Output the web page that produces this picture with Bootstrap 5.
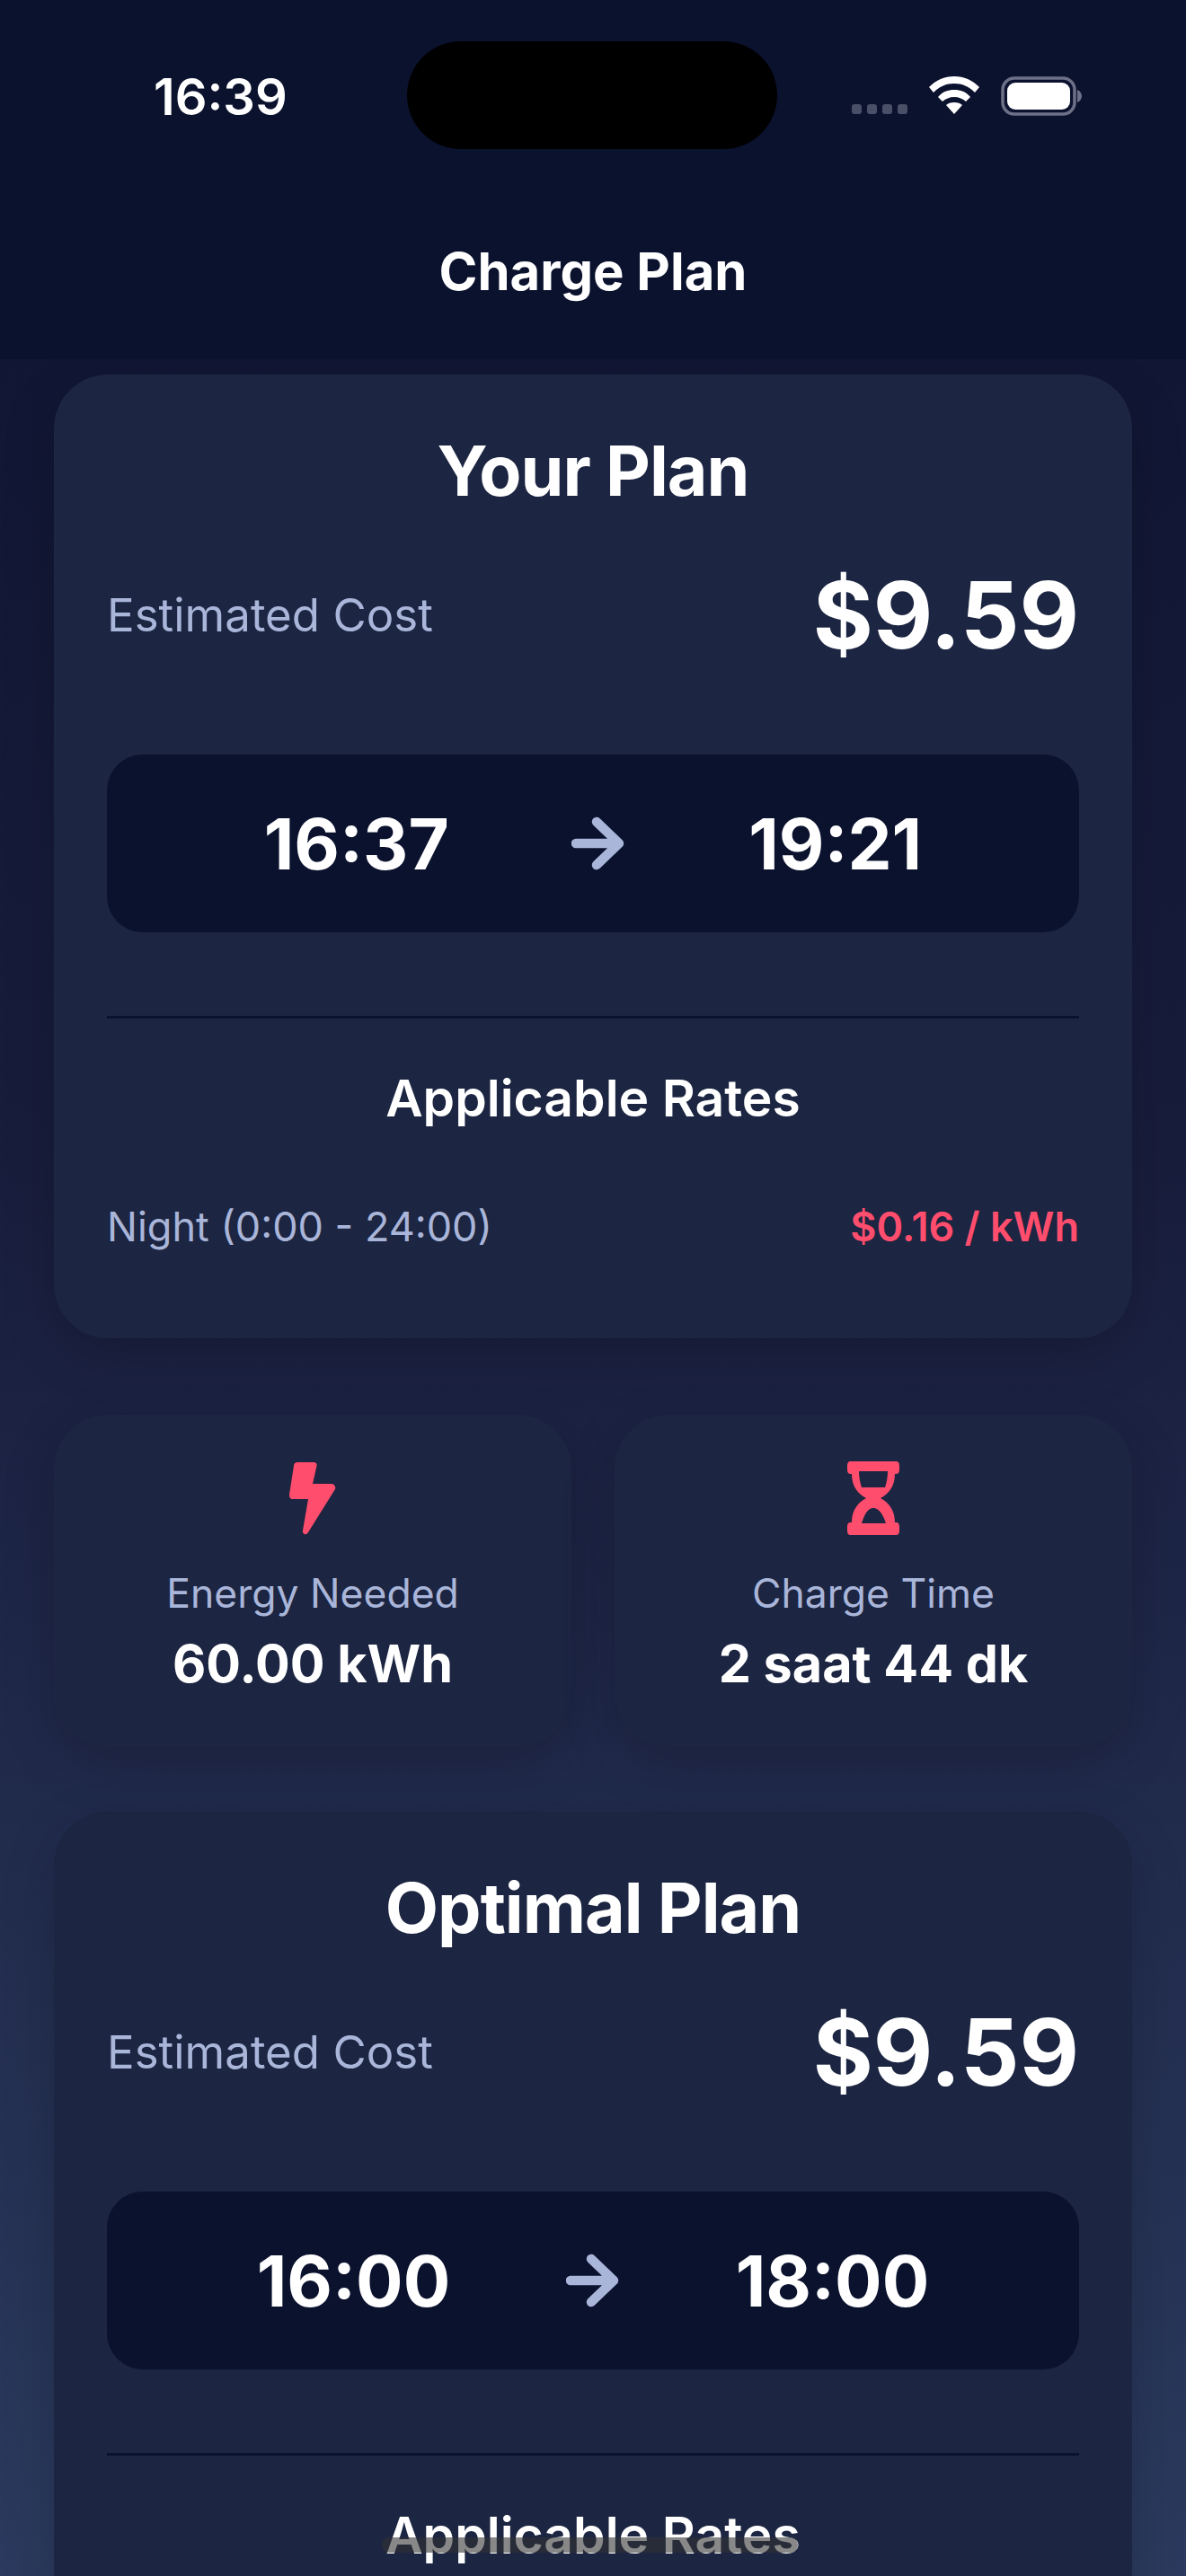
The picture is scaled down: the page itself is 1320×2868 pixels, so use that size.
<!DOCTYPE html>
<html lang="en"><head><meta charset="utf-8"><title>Charge Plan</title>
<link href="https://cdn.jsdelivr.net/npm/bootstrap@5.3.0/dist/css/bootstrap.min.css" rel="stylesheet">
<style>
html,body{height:2868px;overflow:hidden}
body{font-family:Inter,"Liberation Sans",sans-serif;color:#fff;background:linear-gradient(180deg,#0d1330 0%,#181d3c 45%,#2b3a5e 100%);position:relative}
.top-wrap{height:400px;background:#0b122e}
.status-strip{height:220px;padding:46px 116px 0 171px}
.clock{font-size:56px;font-weight:600;line-height:124px;width:150px}
.island{width:412px;height:120px;background:#000;border-radius:60px;margin-left:132px}
.status-icons{margin-left:auto;height:90px;padding-top:39px}
.sig-dots{gap:6px;padding-top:31px;margin-right:24px}
.sig-dots i{width:11px;height:11px;border-radius:3px;background:#4a4f68;display:block}
.wifi-svg{margin-right:24px}
.top-title{font-size:58px;font-weight:650;line-height:164px;text-align:center}
.sheet{padding:17px 60px 0;height:2468px;overflow:hidden}
.panel{background:#1c2541;border-radius:60px;box-shadow:0 20px 60px rgba(0,0,0,.18)}
.main-panel{padding:61px 59px 0;height:1073px}
.panel-title{font-size:77px;font-weight:700;line-height:92px;text-align:center;margin:0;letter-spacing:-1px}
.cost-row{margin-top:39px;height:152px}
.cost-label{font-size:51px;color:#a9b5d9;font-weight:400}
.cost-value{font-size:102.5px;font-weight:700;line-height:120px}
.time-box{background:#0b122e;border-radius:40px;height:198px;margin-top:79px;padding:0 38px;font-size:78px;font-weight:700}
.arrow-svg{width:60px;height:60px}
.rule{height:3px;background:#0b122e;margin-top:93px}
.rates-title{font-size:57px;font-weight:600;line-height:68px;text-align:center;margin-top:55px}
.rate-row{margin-top:79px;height:60px;font-size:45px;color:#a9b5d9}
.rate-price{color:#ff4d6d;font-weight:600}
.stat-grid{margin-top:85px;gap:48px}
.stat{flex:1 1 0;height:370px;padding-top:52px;text-align:center}
.stat-icon{height:82px;display:block;margin:0 auto}
.stat-label{font-size:44.500px;color:#a9b5d9;line-height:54px;margin-top:38px}
.stat-value{font-size:57.500px;font-weight:700;line-height:68px;margin-top:17px}
.second{margin-top:72px}
.home-pill{position:absolute;left:425px;top:2825px;width:463px;height:17px;border-radius:8px;background:rgba(50,50,50,.58)}
</style></head><body>
<div class="top-wrap">
<div class="status-strip d-flex">
 <div class="clock">16:39</div>
 <div class="island"></div>
 <div class="status-icons d-flex align-items-start">
  <div class="sig-dots d-flex"><i></i><i></i><i></i><i></i></div>
  <svg class="wifi-svg" width="56" height="42" viewBox="0 0 56 42"><path fill="#fff" d="M28 0C17 0 8 4 0 12l5 6C12 11 19 8 28 8s16 3 23 10l5-6C48 4 39 0 28 0ZM28 15c-7 0-13 2-18 8l5 5c3-3 8-5 13-5s10 2 13 5l5-5c-5-6-11-8-18-8ZM28 29c-4 0-7 1-9 3l9 10 9-10c-2-2-5-3-9-3Z"/></svg>
  <svg width="90" height="44" viewBox="0 0 90 44"><rect x="2" y="2" width="80" height="40" rx="13" fill="none" stroke="#6d7187" stroke-width="3.500"/><rect x="7" y="7" width="70" height="30" rx="9" fill="#fff"/><path d="M85 15c3 1 5 4 5 7s-2 6-5 7Z" fill="#6d7187"/></svg>
 </div>
</div>
<div class="top-title">Charge Plan</div>
</div>
<div class="sheet">
 <section class="panel main-panel">
  <h2 class="panel-title">Your Plan</h2>
  <div class="cost-row d-flex justify-content-between align-items-center"><span class="cost-label">Estimated Cost</span><span class="cost-value">$9.59</span></div>
  <div class="time-box d-flex justify-content-evenly align-items-center"><span>16:37</span><svg class="arrow-svg" viewBox="0 0 60 60"><path d="M5 30h48M28 6l25 24-25 24" fill="none" stroke="#a9b5d9" stroke-width="10.500" stroke-linecap="round" stroke-linejoin="round"/></svg><span>19:21</span></div>
  <div class="rule"></div>
  <div class="rates-title">Applicable Rates</div>
  <div class="rate-row d-flex justify-content-between align-items-center"><span>Night (0:00 - 24:00)</span><span class="rate-price">$0.16 / kWh</span></div>
 </section>
 <div class="stat-grid d-flex">
  <div class="panel stat">
   <svg class="stat-icon" width="52" height="82" viewBox="0 0 52 82"><path fill="#ff4d6d" d="M9 1h18c3 0 4 2 3.500 4L26 25h20c4 0 6 3 5 6L21 79c-2 4-7 2-6-2l6-35H4c-3 0-4-2-4-5L5 5c0-3 2-4 4-4Z"/></svg>
   <div class="stat-label">Energy Needed</div>
   <div class="stat-value">60.00 kWh</div>
  </div>
  <div class="panel stat">
   <svg class="stat-icon" width="58" height="82" viewBox="0 0 58 82"><path fill="#ff4d6d" fill-rule="evenodd" d="M4 0h50c3 0 4 2 4 5v4c0 3-1 5-4 5h-1c0 14-7 22-16 27 9 5 16 13 16 27h1c3 0 4 2 4 5v4c0 3-1 5-4 5H4c-3 0-4-2-4-5v-4c0-3 1-5 4-5h1c0-14 7-22 16-27C12 36 5 28 5 14H4c-3 0-4-2-4-5V5c0-3 1-5 4-5Zm9 11c0 6 1 12 3 18h26c2-6 3-12 3-18Zm3 58h27c-3-10-8-17-14-17s-10 7-13 17Z"/></svg>
   <div class="stat-label">Charge Time</div>
   <div class="stat-value">2 saat 44 dk</div>
  </div>
 </div>
 <section class="panel main-panel second">
  <h2 class="panel-title">Optimal Plan</h2>
  <div class="cost-row d-flex justify-content-between align-items-center"><span class="cost-label">Estimated Cost</span><span class="cost-value">$9.59</span></div>
  <div class="time-box d-flex justify-content-evenly align-items-center"><span>16:00</span><svg class="arrow-svg" viewBox="0 0 60 60"><path d="M5 30h48M28 6l25 24-25 24" fill="none" stroke="#a9b5d9" stroke-width="10.500" stroke-linecap="round" stroke-linejoin="round"/></svg><span>18:00</span></div>
  <div class="rule"></div>
  <div class="rates-title">Applicable Rates</div>
 </section>
</div>
<div class="home-pill"></div>
</body></html>
